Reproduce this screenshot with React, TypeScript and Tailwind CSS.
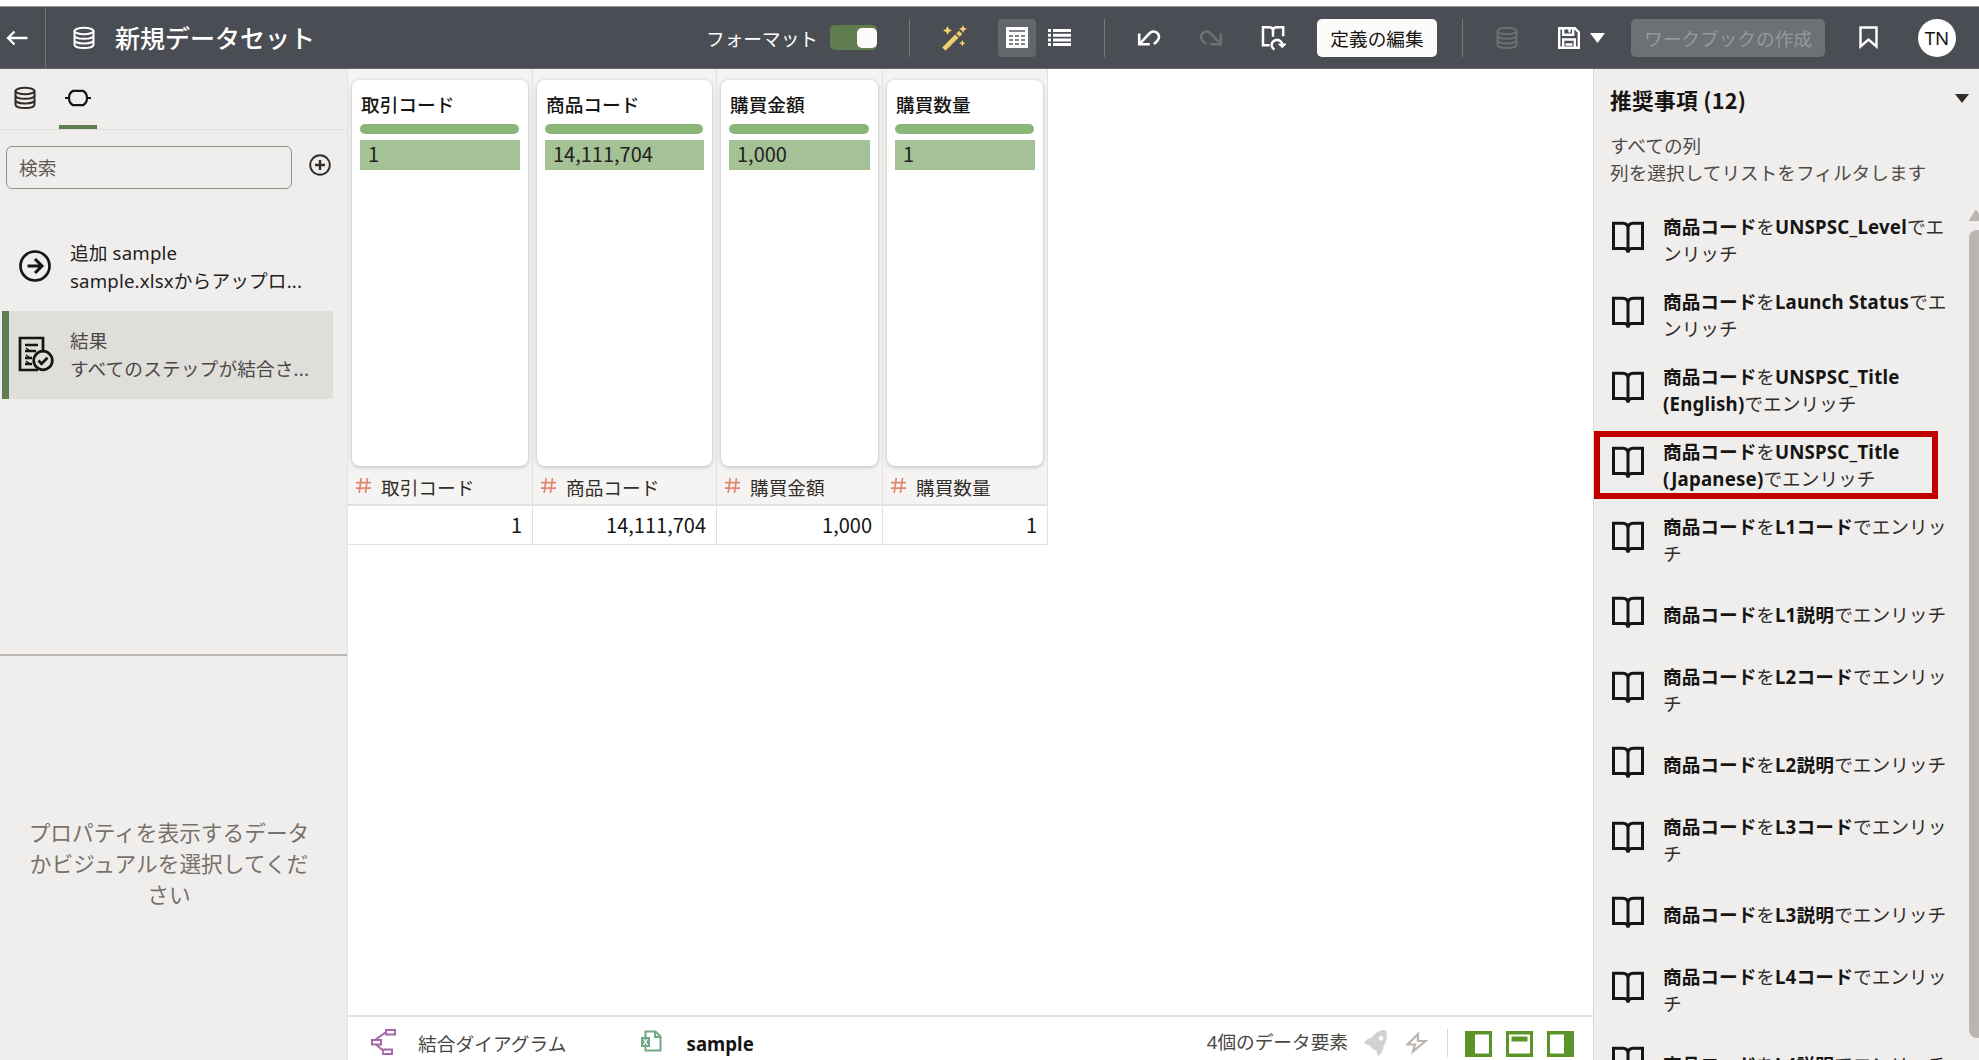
import type { ReactNode } from "react";
import clsx from "clsx";

type Column = {
  name: string;
  value: string;
  width: string;
};

type Recommendation = {
  target: string;
  highlighted?: boolean;
};

const columns: Column[] = [
  { name: "取引コード", value: "1", width: "w-[185px]" },
  { name: "商品コード", value: "14,111,704", width: "w-[184px]" },
  { name: "購買金額", value: "1,000", width: "w-[166px]" },
  { name: "購買数量", value: "1", width: "w-[165px]" },
];

const recommendations: Recommendation[] = [
  { target: "UNSPSC_Level" },
  { target: "Launch Status" },
  { target: "UNSPSC_Title (English)" },
  { target: "UNSPSC_Title (Japanese)", highlighted: true },
  { target: "L1コード" },
  { target: "L1説明" },
  { target: "L2コード" },
  { target: "L2説明" },
  { target: "L3コード" },
  { target: "L3説明" },
  { target: "L4コード" },
  { target: "L4説明" },
];

function DatabaseIcon({ className }: { className?: string }) {
  return (
    <svg className={className} width="24" height="24" viewBox="0 0 24 24" fill="none" stroke="currentColor" strokeWidth="2">
      <ellipse cx="12" cy="5" rx="9.5" ry="3.2" />
      <path d="M2.5 5v13.8c0 1.8 4.2 3.2 9.5 3.2s9.5-1.4 9.5-3.2V5" />
      <path d="M2.5 9.6c0 1.8 4.2 3.2 9.5 3.2s9.5-1.4 9.5-3.2M2.5 14.2c0 1.8 4.2 3.2 9.5 3.2s9.5-1.4 9.5-3.2" />
    </svg>
  );
}

function BookIcon() {
  return (
    <svg className="shrink-0 text-[#161513]" width="34" height="34" viewBox="0 0 34 34" fill="none" stroke="currentColor" strokeWidth="3">
      <path d="M2.500 3.200h9.100c3.400 0 5.400 2 5.400 5 0-3 2-5 5.400-5h9.100v25.400H21c-2.600 0-4 1.400-4 4 0-2.600-1.400-4-4-4H2.500z" />
      <path d="M17 8v24.500" />
    </svg>
  );
}

function UndoIcon({ className }: { className?: string }) {
  return (
    <svg className={className} width="24" height="18" viewBox="0 0 24 18" fill="none" stroke="currentColor" strokeWidth="2.600">
      <path d="M2.200 4.500v10.800h10.600" />
      <path d="M2.800 14.700 12 4.800c2.400-2.600 5.600-3 8-1 2.700 2.300 2.600 5.600.3 8l-3.300 3.400" />
    </svg>
  );
}

function PanelIcon({ side }: { side: "left" | "top" | "right" }) {
  return (
    <svg width="27" height="26" viewBox="0 0 27 26">
      <path d="M0 0h27v26H0z" fill="#5c942a" />
      {side === "left" && <path d="M10 3.500h14v19H10z" fill="#fff" />}
      {side === "top" && <path d="M3 3.500h21v19H3zM5.500 5.500v5h16v-5z" fill="#fff" fillRule="evenodd" />}
      {side === "right" && <path d="M3 3.500h14v19H3z" fill="#fff" />}
    </svg>
  );
}

function Divider({ className }: { className?: string }) {
  return <div className={clsx("h-[38px] w-px bg-[#77797d]", className)} />;
}

function Header() {
  return (
    <header className="flex h-[63px] shrink-0 items-center border-y border-t-[#8e9593] border-b-[#62656a] bg-[#4a4d53] text-white">
      <div className="flex h-full w-[46px] items-center border-r border-[#6e7175] pl-[6px]">
        <svg width="23" height="16" viewBox="0 0 23 16" fill="none" stroke="currentColor" strokeWidth="2.300">
          <path d="M21.500 8H2M8.500 1.500 2 8l6.500 6.500" />
        </svg>
      </div>
      <DatabaseIcon className="ml-[26px]" />
      <h1 className="ml-[19px] w-[591px] text-[25px] leading-[36px] font-medium">新規データセット</h1>
      <span className="w-[124px] pt-[3px]">フォーマット</span>
      <div className="flex h-[25px] w-[47px] items-center justify-end rounded-[5px] bg-[#5f7d4f]">
        <div className="h-[20px] w-[20px] rounded-[5px] bg-[#fcfbfa]" />
      </div>
      <Divider className="ml-[32px]" />
      <svg className="ml-[31px]" width="26" height="26" viewBox="0 0 26 26" fill="#f3cf6b">
        <path d="m1.200 22.500 13-13 3.300 3.300-13 13z" />
        <path d="m15.300 8.400 2.700-2.700 3.300 3.300-2.700 2.700z" />
        <path d="m6.500 1 1.400 3.100L11 5.500 7.900 6.900 6.500 10 5.100 6.900 2 5.500l3.100-1.400zM22 0l1.200 2.800L26 4l-2.800 1.200L22 8l-1.200-2.800L18 4l2.800-1.200zM21.300 15l1 2.200 2.200 1-2.200 1-1 2.300-1-2.300-2.300-1 2.300-1z" />
      </svg>
      <div className="ml-[31px] flex h-[38px] w-[38px] items-center justify-center rounded-[4px] bg-[#63666a]">
        <svg width="22" height="21" viewBox="0 0 22 21">
          <path d="M0 0h22v21H0z" fill="#fff" />
          <path d="M3 4h16M3 9h4M9 9h4M15 9h4M3 13h4M9 13h4M15 13h4M3 17h4M9 17h4M15 17h4" stroke="#5b5e62" strokeWidth="1.500" />
        </svg>
      </div>
      <svg className="ml-[12px]" width="23" height="17" viewBox="0 0 23 17" fill="none" stroke="#fff" strokeWidth="3">
        <path d="M0 1.500h3M5 1.500h18M0 6.200h3M5 6.200h18M0 10.900h3M5 10.900h18M0 15.500h3M5 15.500h18" />
      </svg>
      <Divider className="ml-[33px]" />
      <UndoIcon className="ml-[32px]" />
      <UndoIcon className="ml-[38px] -scale-x-100 text-[#6c6f73]" />
      <svg className="ml-[38px]" width="26" height="26" viewBox="0 0 26 26" fill="none" stroke="#fff" strokeWidth="2.500">
        <path d="M8.500 20.300H2V2.200h6c2.500 0 4 1 4 3.500v6M12 5.700c0-2.500 1.600-3.500 4-3.500h6.200v9" />
        <path d="M13.500 24.500c-2.800-1.500-3.700-4.800-2-7.300 1.900-2.700 5.800-3.100 8.200-.9 1.200 1.100 1.600 2.500 1.600 4" />
        <path d="m17.500 19 3.800 3.800 3.700-3.800z" fill="#fff" strokeWidth="1" />
      </svg>
      <button className="ml-[30px] h-[38px] w-[120px] rounded-[5px] bg-[#fcfbfa] pt-[3px] text-[#161513]">定義の編集</button>
      <Divider className="ml-[25px]" />
      <DatabaseIcon className="ml-[32px] text-[#6c6f73]" />
      <svg className="ml-[38px]" width="24" height="24" viewBox="0 0 24 24" fill="none" stroke="#fff" strokeWidth="2.400">
        <path d="M2.200 2.200h15.600l4 4v15.600H2.200zM6.200 2.500v6.300h10V2.500M6.200 21.500v-8h11.600v8M8.500 18.500h7" />
        <path d="M12.500 3v3.500" />
      </svg>
      <svg className="ml-[9px]" width="15" height="10" viewBox="0 0 15 10">
        <path d="M0 0h15L7.500 10z" fill="#fff" />
      </svg>
      <button className="ml-[26px] h-[38px] w-[194px] rounded-[5px] bg-[#6d7074] pt-[3px] text-[#96999c]">ワークブックの作成</button>
      <svg className="ml-[34px]" width="19" height="23" viewBox="0 0 19 23" fill="none" stroke="#fff" strokeWidth="2.400">
        <path d="M1.500 1.500h16v19l-8-7-8 7z" />
      </svg>
      <div className="ml-[40px] flex h-[38px] w-[38px] items-center justify-center rounded-full bg-white text-[#161513]">TN</div>
    </header>
  );
}

function Step({ icon, title, summary, active }: { icon: ReactNode; title: string; summary: string; active?: boolean }) {
  return (
    <div
      className={clsx(
        "ml-[2px] flex h-[88px] w-[331px] items-center border-l-[7px]",
        active ? "border-[#5f7d4f] bg-[#dfdedb] text-[#4b4845]" : "border-transparent text-[#24211f]",
      )}
    >
      <div className="flex w-[61px] shrink-0 pl-[9px]">{icon}</div>
      <div className="leading-[28.500px] tracking-[0.150px]">
        <p>{title}</p>
        <p className="whitespace-nowrap">{summary}</p>
      </div>
    </div>
  );
}

function Sidebar() {
  return (
    <aside className="flex w-[348px] shrink-0 flex-col border-r border-[#e4e2e0] bg-[#f0eeed] text-[#312d2a]">
      <div className="flex h-[61px] shrink-0 border-b border-[#e1dfdc]">
        <DatabaseIcon className="mt-[17px] ml-[13px]" />
        <div className="ml-[22px] flex w-[38px] flex-col items-center border-b-[4px] border-[#5f7d4f] pt-[20px]">
          <svg width="26" height="18" viewBox="0 0 26 18" fill="none" stroke="#161513" strokeWidth="2.200">
            <path d="M8 1.800h10c3.500 2 4 4.200 4 7.200s-.5 5.200-4 7.200H8C4.500 14.200 4 12 4 9s.5-5.200 4-7.200zM0 9h4M22 9h4" />
          </svg>
        </div>
      </div>
      <div className="mt-[16px] flex items-center">
        <div className="ml-[6px] flex h-[43px] w-[286px] items-center rounded-[6px] border border-[#96938c] pl-[12px] text-[#5c5852]">
          検索
        </div>
        <svg className="mb-[5px] ml-[16px]" width="24" height="24" viewBox="0 0 24 24" fill="none" stroke="currentColor" strokeWidth="1.900">
          <circle cx="12" cy="12" r="9.800" />
          <path d="M12 7v10M7 12h10" strokeWidth="2.400" />
        </svg>
      </div>
      <div className="mt-[34px] h-[433px] shrink-0 border-b-2 border-[#bbb6b2]">
        <Step
          title="追加 sample"
          summary="sample.xlsxからアップロ..."
          icon={
            <svg className="mb-[2px]" width="34" height="34" viewBox="0 0 34 34" fill="none" stroke="#161513" strokeWidth="2.700">
              <circle cx="17" cy="17" r="14.500" />
              <path d="M9.500 17h14M17 10l7 7-7 7" strokeWidth="3" />
            </svg>
          }
        />
        <Step
          active
          title="結果"
          summary="すべてのステップが結合さ..."
          icon={
            <svg className="mb-[2px]" width="36" height="36" viewBox="0 0 36 36" fill="none" stroke="#161513" strokeWidth="2.700">
              <path d="M25 14V2H2v32h18" />
              <path d="M7 9h13M7 15h11M7 22h7M7 28h7" strokeWidth="2.600" />
              <path d="M8 12l4 3M8 19l4 3M8 25l4 3" strokeWidth="1.500" />
              <circle cx="25" cy="24.500" r="9.300" />
              <path d="m20.500 24.500 3 3.200 6-6" />
            </svg>
          }
        />
      </div>
      <p className="mt-[161px] pr-[31px] pl-[22px] text-center text-[21.700px] leading-[31.200px] text-[#77716b]">
        プロパティを表示するデータかビジュアルを選択してください
      </p>
    </aside>
  );
}

function ColumnView({ column }: { column: Column }) {
  return (
    <div className={clsx("flex flex-col border-r border-[#e2e1df]", column.width)}>
      <div className="h-[437px] border-b-2 border-[#e2e1df] bg-[#f5f4f2] px-[4px] pt-[11px]">
        <div className="h-[386px] rounded-[8px] bg-white px-[8px] pt-[11px] shadow-[0_1px_4px_rgba(0,0,0,0.25)]">
          <p className="h-[33px] pl-px leading-[28px] font-medium text-[#161513]">{column.name}</p>
          <div className="mr-px h-[10px] rounded-full bg-[#8bb67a]" />
          <div className="mt-[6px] flex h-[30px] items-center bg-[#a5c297] pb-[2px] pl-[8px] font-['Noto_Sans_CJK_JP',sans-serif] text-[20px] text-[#24211f]">
            {column.value}
          </div>
        </div>
        <div className="flex h-[38px] items-center pt-[5px] pl-[4px] text-[#312d2a]">
          <svg className="mb-[5px]" width="15" height="15" viewBox="0 0 15 15" stroke="#e08672" strokeWidth="1.700">
            <path d="M5.200 0 3.200 15M11.500 0l-2 15M0 4.600h15M0 10.200h15" />
          </svg>
          <span className="ml-[10px]">{column.name}</span>
        </div>
      </div>
      <div className="flex h-[39px] items-center justify-end border-b border-[#e2e1df] pr-[10px] font-['Noto_Sans_CJK_JP',sans-serif] text-[20px] text-[#161513]">
        {column.value}
      </div>
    </div>
  );
}

function Footer() {
  return (
    <footer className="flex h-[45px] shrink-0 items-center border-t-2 border-[#e2e1df] pt-[10px] text-[#4a4643]">
      <svg className="mb-[4px] ml-[22px]" width="28" height="27" viewBox="0 0 28 27" fill="none" stroke="#a567a8" strokeWidth="2">
        <path d="M16 2h9v4.500h-9zM2 12h9v4.500H2zM13 21.500h9V26h-9zM5 12l11-8M6 16.500l8 7" />
      </svg>
      <span className="ml-[20px] tracking-[0.100px]">結合ダイアグラム</span>
      <svg className="mb-[5px] ml-[74px]" width="21" height="22" viewBox="0 0 21 22" fill="none" stroke="#72a884" strokeWidth="2">
        <path d="M4.500 8V1.500h10l5 5v14h-15V17M14 1.500V7h5.500" />
        <path d="M0 7h9v10H0z" fill="#72a884" stroke="none" />
        <path d="m2.500 9 4 6m0-6-4 6" stroke="#fff" strokeWidth="1.300" />
      </svg>
      <span className="ml-[25px] font-bold text-[#161513]">sample</span>
      <span className="mr-[16px] mb-[3px] ml-auto">4個のデータ要素</span>
      <svg className="mb-px" width="24" height="26" viewBox="0 0 24 26" fill="#d3d1cf">
        <path
          d="M15 1.500c2.500-1.300 5-1.800 7-1 1.500 5.500.8 11-2.500 15.500-.3 3.800-1.700 7-5 10-1.300-1.700-1.800-3.500-2-5.500L8.500 19 6 15.500c-2.200-.2-4-.9-6-2.200 1.800-3.600 4.500-5.300 8-5.800 1.500-2.800 4-4.800 7-6zm2 4.500a2.400 2.400 0 1 0 0 4.800 2.400 2.400 0 0 0 0-4.800z"
          fillRule="evenodd"
        />
      </svg>
      <svg className="mb-px ml-[17px]" width="23" height="22" viewBox="0 0 23 22" fill="none" stroke="#b9b4b0" strokeWidth="2.200">
        <path d="M13 2 2.500 12.500H10l-2 7L20.500 9H13z" />
      </svg>
      <div className="mr-[17px] mb-[2px] ml-[19px] h-[28px] w-px bg-[#d9d7d4]" />
      <div className="mr-[19px] flex gap-[14px]">
        <PanelIcon side="left" />
        <PanelIcon side="top" />
        <PanelIcon side="right" />
      </div>
    </footer>
  );
}

function RecommendationItem({ item }: { item: Recommendation }) {
  return (
    <li className="relative flex h-[75px] items-center pl-[17px]">
      <BookIcon />
      <p className="mt-[7px] ml-[18px] w-[290px] leading-[27.500px] text-[#312d2a]">
        <b className="text-[#161513]">商品コード</b>を<b className="tracking-[0.200px] text-[#161513]">{item.target}</b>でエンリッチ
      </p>
      {item.highlighted && <div className="absolute top-[7px] left-0 h-[68px] w-[344px] border-[6px] border-[#c00000]" />}
    </li>
  );
}

function RecommendationPanel() {
  return (
    <aside className="flex w-[386px] shrink-0 flex-col border-l border-[#d8d5d2] bg-[#f0eeed]">
      <div className="flex h-[61px] shrink-0 items-center pr-[10px] pl-[16px]">
        <h2 className="pt-[2px] font-['Noto_Sans_CJK_JP',sans-serif] text-[21.700px] font-bold tracking-[0.300px] text-[#161513]">
          推奨事項 (12)
        </h2>
        <svg className="mb-[2px] ml-auto" width="14" height="9" viewBox="0 0 14 9">
          <path d="M0 0h14L7 9z" fill="#312d2a" />
        </svg>
      </div>
      <div className="h-[75px] shrink-0 pl-[16px] leading-[26.500px] text-[#4f4b47]">
        <p className="pt-[3px]">すべての列</p>
        <p>列を選択してリストをフィルタします</p>
      </div>
      <div className="flex min-h-0 flex-1">
        <ul className="-mt-[6px] flex-1">
          {recommendations.map((item) => (
            <RecommendationItem key={item.target} item={item} />
          ))}
        </ul>
        <div className="flex w-[11px] flex-col overflow-hidden">
          <svg className="mt-[4px] shrink-0" width="16" height="12" viewBox="0 0 16 12">
            <path d="M8 1 15 12H1z" fill="#bab5b1" stroke="#bab5b1" strokeLinejoin="round" />
          </svg>
          <div className="mt-[9px] ml-px h-[808px] w-[16px] shrink-0 rounded-[8px] bg-[#bab5b1]" />
        </div>
      </div>
    </aside>
  );
}

export default function App() {
  return (
    <div className="flex h-[1060px] w-[1979px] flex-col overflow-hidden bg-white pt-[6px] font-['Noto_Sans','Noto_Sans_CJK_JP',sans-serif] text-[18.670px]">
      <Header />
      <div className="flex min-h-0 flex-1">
        <Sidebar />
        <main className="flex min-w-0 flex-1 flex-col">
          <div className="flex flex-1 items-start">
            {columns.map((column) => (
              <ColumnView key={column.name} column={column} />
            ))}
          </div>
          <Footer />
        </main>
        <RecommendationPanel />
      </div>
    </div>
  );
}
